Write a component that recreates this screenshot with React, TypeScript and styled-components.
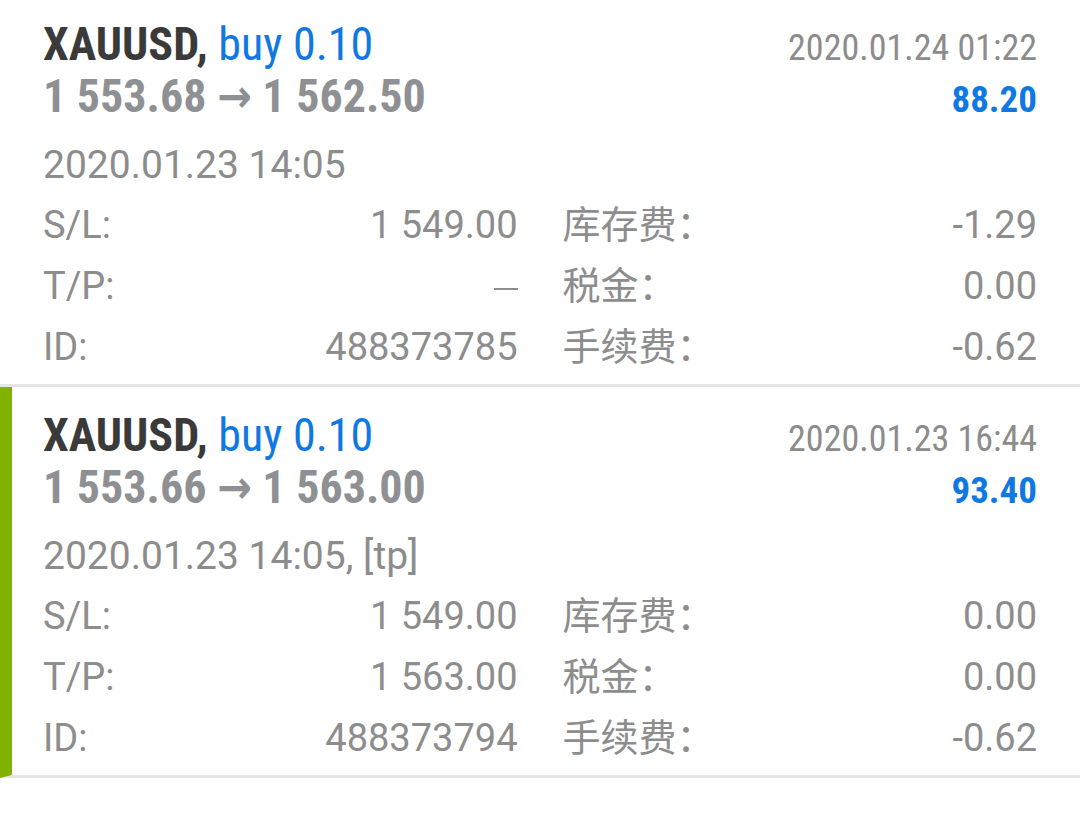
import React from 'react';
import styled, { createGlobalStyle } from 'styled-components';

const GlobalStyle = createGlobalStyle`
  body {
    margin: 0;
    background: #ffffff;
    font-family: Roboto, "Noto Sans CJK SC", sans-serif;
  }
`;

const condensed = `"Roboto Condensed", "Liberation Sans Narrow", "DejaVu Sans Condensed", Roboto, sans-serif`;

const List = styled.div`
  width: 1080px;
  margin-top: -4px;
`;

const Card = styled.div<{ $active?: boolean }>`
  box-sizing: border-box;
  height: 391px;
  padding: 24px 43px 0 ${(p) => (p.$active ? '31px' : '43px')};
  border-left: ${(p) => (p.$active ? '12px solid #80b300' : 'none')};
  border-bottom: 3px solid #e6e6e6;
`;

const Header = styled.div`
  display: grid;
  grid-template-columns: 1fr auto;
  align-items: baseline;
  font-family: ${condensed};
  font-stretch: condensed;
  line-height: 48px;
`;

const Title = styled.div`
  font-size: 46px;
  font-weight: 700;
  color: #3a3a3a;
  white-space: nowrap;
`;

const Side = styled.span`
  color: #0f78e2;
  font-weight: 400;
`;

const OpenTime = styled.div`
  font-size: 36px;
  color: #8c8c8c;
  text-align: right;
`;

const Prices = styled.div`
  font-size: 46px;
  font-weight: 700;
  color: #8f9093;
  white-space: nowrap;
`;

const Profit = styled.div`
  font-size: 37px;
  font-weight: 700;
  color: #0f78e2;
  text-align: right;
`;

const DateLine = styled.div`
  margin-top: 12px;
  font-size: 39px;
  line-height: 59px;
  color: #8c8c8c;
`;

const Grid = styled.div`
  display: grid;
  grid-template-columns: 1fr 1fr;
  column-gap: 45px;
`;

const Row = styled.div`
  display: flex;
  justify-content: space-between;
  font-size: 38px;
  line-height: 61px;
  color: #8d8d8d;
  white-space: nowrap;
`;

const Dash = styled.span`
  align-self: center;
  width: 24px;
  height: 2px;
  margin-top: 4px;
  background: #8d8d8d;
`;

type Trade = {
  closeTime: string;
  open: string;
  close: string;
  profit: string;
  openTime: string;
  sl: string;
  tp: string | null;
  id: string;
  swap: string;
  tax: string;
  fee: string;
  active?: boolean;
};

const trades: Trade[] = [
  {
    closeTime: '2020.01.24 01:22',
    open: '1 553.68',
    close: '1 562.50',
    profit: '88.20',
    openTime: '2020.01.23 14:05',
    sl: '1 549.00',
    tp: null,
    id: '488373785',
    swap: '-1.29',
    tax: '0.00',
    fee: '-0.62',
  },
  {
    closeTime: '2020.01.23 16:44',
    open: '1 553.66',
    close: '1 563.00',
    profit: '93.40',
    openTime: '2020.01.23 14:05, [tp]',
    sl: '1 549.00',
    tp: '1 563.00',
    id: '488373794',
    swap: '0.00',
    tax: '0.00',
    fee: '-0.62',
    active: true,
  },
];

const TradeCard = ({ t }: { t: Trade }) => (
  <Card $active={t.active}>
    <Header>
      <Title>
        XAUUSD, <Side>buy 0.10</Side>
      </Title>
      <OpenTime>{t.closeTime}</OpenTime>
      <Prices>
        {t.open} → {t.close}
      </Prices>
      <Profit>{t.profit}</Profit>
    </Header>
    <DateLine>{t.openTime}</DateLine>
    <Grid>
      <Row><span>S/L:</span><span>{t.sl}</span></Row>
      <Row><span>库存费：</span><span>{t.swap}</span></Row>
      <Row><span>T/P:</span>{t.tp ? <span>{t.tp}</span> : <Dash />}</Row>
      <Row><span>税金：</span><span>{t.tax}</span></Row>
      <Row><span>ID:</span><span>{t.id}</span></Row>
      <Row><span>手续费：</span><span>{t.fee}</span></Row>
    </Grid>
  </Card>
);

const App = () => (
  <>
    <GlobalStyle />
    <List>
      {trades.map((t) => (
        <TradeCard key={t.id} t={t} />
      ))}
    </List>
  </>
);

export default App;
